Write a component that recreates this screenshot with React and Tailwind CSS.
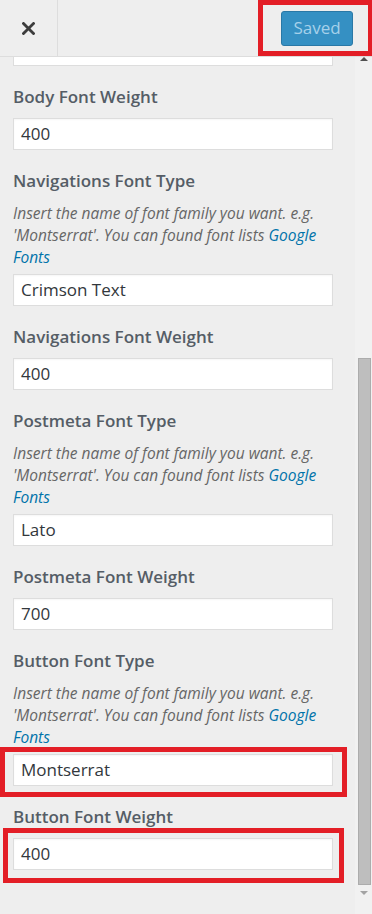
export default function App() {
  const Label = ({ children }) => (
    <div className="text-[17px] leading-6 font-semibold text-[#555d66] mb-[9px]">{children}</div>
  );
  const Input = ({ value }) => (
    <div className="h-[32px] w-[320px] bg-white border border-[#dddddd] pl-[7px] flex items-center text-[17px] text-[#32373c] shadow-[inset_0_1px_2px_rgba(0,0,0,0.04)]">
      {value}
    </div>
  );
  const Desc = () => (
    <div className="w-[326px] text-[15.5px] leading-[22px] italic text-[#666666] mb-[6px]">
      Insert the name of font family you want. e.g. 'Montserrat'. You can found font lists{" "}
      <span className="text-[#0073aa]">Google Fonts</span>
    </div>
  );
  const Field = ({ label, value, desc }) => (
    <div className="mt-[19px]">
      <Label>{label}</Label>
      {desc && <Desc />}
      <Input value={value} />
    </div>
  );

  return (
    <div className="relative w-[372px] h-[914px] bg-[#eeeeee] overflow-hidden font-['Open_Sans',sans-serif] flex flex-col">
      <header className="h-[57px] shrink-0 flex border-b border-[#dddddd]">
        <div className="w-[58px] border-r border-[#dddddd] flex items-center justify-center pt-[1px]">
          <svg width="13" height="13" viewBox="0 0 13 13">
            <path d="M1.5 1.5 L11.5 11.5 M11.5 1.5 L1.5 11.5" stroke="#3c3c3c" strokeWidth="2.8" strokeLinecap="square" />
          </svg>
        </div>
        <div className="flex-1 flex justify-end items-center pr-[19px]">
          <div className="w-[72px] h-[35px] rounded-[3px] bg-[#3590c3] border border-[#2a78a6] flex items-center justify-center text-[17px] text-[#a6d0ea]">
            Saved
          </div>
        </div>
      </header>

      <div className="flex flex-1 min-h-0">
        <div className="w-[355px] pl-[13px]">
          <div className="h-[9px] w-[320px] bg-white border-x border-b border-[#dddddd]" />
          <Field label="Body Font Weight" value="400" />
          <Field label="Navigations Font Type" value="Crimson Text" desc />
          <Field label="Navigations Font Weight" value="400" />
          <Field label="Postmeta Font Type" value="Lato" desc />
          <Field label="Postmeta Font Weight" value="700" />
          <Field label="Button Font Type" value="Montserrat" desc />
          <Field label="Button Font Weight" value="400" />
        </div>
        <div className="w-[17px] bg-[#f1f1f1] flex flex-col items-center">
          <div className="w-0 h-0 border-x-[4px] border-x-transparent border-b-[4px] border-b-[#505050]" />
          <div className="mt-[297px] ml-[1px] w-[13px] h-[527px] bg-[#bebebe] border border-[#acacac]" />
          <div className="mt-[6px] w-0 h-0 border-x-[4px] border-x-transparent border-t-[4px] border-t-[#a3a3a3]" />
        </div>
      </div>

      <div className="absolute left-[258px] top-0 w-[114px] h-[56px] border-[5px] border-r-[4px] border-[#e31e26]" />
      <div className="absolute left-0 top-[747px] w-[347px] h-[50px] border-[5px] border-[#e31e26]" />
      <div className="absolute left-[3px] top-[828px] w-[341px] h-[55px] border-[5px] border-[#e31e26]" />
    </div>
  );
}
